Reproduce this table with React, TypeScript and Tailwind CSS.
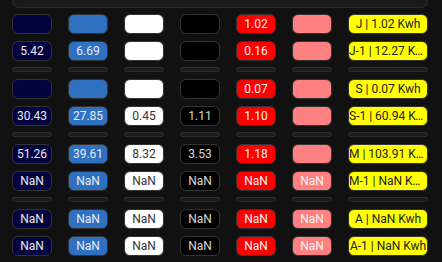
const cellColors = [
    'bg-[#03033f] text-[#e8e8f0]',
    'bg-[#3070c0] text-[#e6ecf5]',
    'bg-white text-[#333333]',
    'bg-black text-[#d8d8d8]',
    'bg-[#ff0000] text-[#f4f4f4]',
    'bg-[#ff8080] text-[#f2f2f2]',
    'bg-[#ffff00] text-[#222222]',
];

type Row = (string | null)[];

// each group: two rows of readings followed by a separator bar
const groups: Row[][] = [
    [
        [null, null, null, null, '1.02', null, 'J | 1.02 Kwh'],
        ['5.42', '6.69', null, null, '0.16', null, 'J-1 | 12.27 Kwh'],
    ],
    [
        [null, null, null, null, '0.07', null, 'S | 0.07 Kwh'],
        ['30.43', '27.85', '0.45', '1.11', '1.10', null, 'S-1 | 60.94 Kwh'],
    ],
    [
        ['51.26', '39.61', '8.32', '3.53', '1.18', null, 'M | 103.91 Kwh'],
        ['NaN', 'NaN', 'NaN', 'NaN', 'NaN', 'NaN', 'M-1 | NaN Kwh'],
    ],
    [
        ['NaN', 'NaN', 'NaN', 'NaN', 'NaN', 'NaN', 'A | NaN Kwh'],
        ['NaN', 'NaN', 'NaN', 'NaN', 'NaN', 'NaN', 'A-1 | NaN Kwh'],
    ],
];

function Cell({ value, index }: { value: string | null; index: number }) {
    return (
        <div
            className={`h-[20px] rounded-[6px] border border-[#333333] text-[12px] leading-[18px] text-center whitespace-nowrap overflow-hidden text-ellipsis ${cellColors[index]}`}
        >
            {value ?? ''}
        </div>
    );
}

function Separator() {
    return (
        <>
            {[0, 1, 2, 3, 4, 5, 6].map((i) => (
                <div
                    key={i}
                    className="h-[5px] -mt-px rounded-full bg-[#1c1c1c] border border-[#2e2e2e]"
                />
            ))}
        </>
    );
}

export default function App() {
    return (
        <div
            className="w-[442px] h-[262px] bg-[#111111] overflow-hidden px-[12px]"
            style={{ fontFamily: 'Roboto, "Liberation Sans", sans-serif' }}
        >
            {/* tail of the panel above */}
            <div className="w-[416px] h-[8px] rounded-b-[7px] bg-[#1a1a1a] border-x border-b border-[#2c2c2c]" />

            <div className="mt-[6px] grid grid-cols-[repeat(6,40px)_80px] gap-x-[16px] gap-y-[7px] w-[416px]">
                {groups.map((rows, g) => (
                    <div key={g} className="contents">
                        {rows.map((row, r) =>
                            row.map((value, c) => (
                                <Cell key={`${g}-${r}-${c}`} value={value} index={c} />
                            ))
                        )}
                        <Separator />
                    </div>
                ))}
            </div>
        </div>
    );
}
